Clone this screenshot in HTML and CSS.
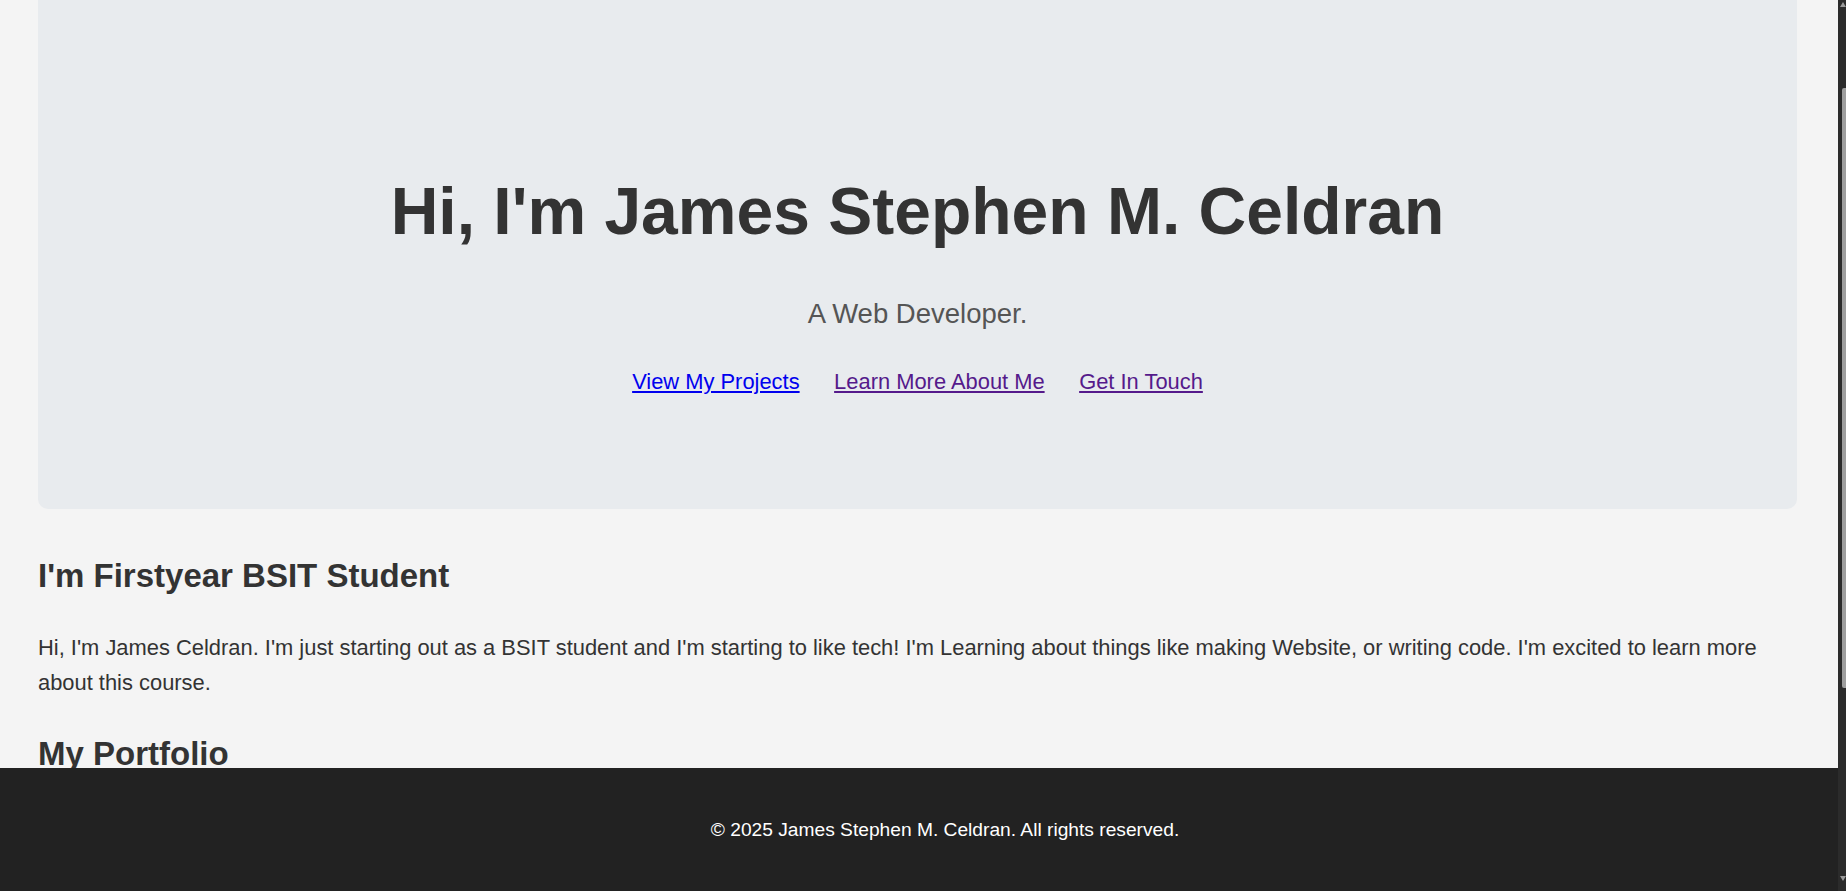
FILE: index.html
```html
<!DOCTYPE html>
<html lang="en">
<head>
<meta charset="utf-8">
<title>James Stephen M. Celdran</title>
<link rel="stylesheet" href="styles.css">
</head>
<body>
<div class="page">
  <div class="viewport">
    <main class="content">
      <section class="hero">
        <h1 class="hero-title">Hi, I'm James Stephen M. Celdran</h1>
        <p class="hero-subtitle">A Web Developer.</p>
        <nav class="hero-links">
          <a class="link link-new" href="#projects">View My Projects</a>
          <a class="link link-visited" href="#about">Learn More About Me</a>
          <a class="link link-visited" href="#contact">Get In Touch</a>
        </nav>
      </section>
      <section class="about" id="about">
        <h2 class="section-title">I'm Firstyear BSIT Student</h2>
        <p class="about-text">Hi, I'm James Celdran. I'm just starting out as a BSIT student and I'm starting to like tech! I'm Learning about things like making Website, or writing code. I'm excited to learn more about this course.</p>
        <h2 class="section-title portfolio-title" id="projects">My Portfolio</h2>
      </section>
    </main>
    <footer class="footer" id="contact">
      <p class="footer-text">© 2025 James Stephen M. Celdran. All rights reserved.</p>
    </footer>
  </div>
  <div class="scrollbar">
    <span class="arrow arrow-up"></span>
    <span class="thumb"></span>
    <span class="arrow arrow-down"></span>
  </div>
</div>
</body>
</html>
```
FILE: styles.css
```css
html, body {
  margin: 0;
  padding: 0;
  height: 100%;
}

body {
  background: #f4f4f4;
  color: #333;
  font-family: "Liberation Sans", Arial, sans-serif;
  overflow: hidden;
}

.page {
  display: flex;
  height: 891px;
}

.viewport {
  flex: 1;
  min-width: 0;
  display: flex;
  flex-direction: column;
}

.content {
  flex: 1;
  overflow: hidden;
  padding: 0 41px 0 38px;
}

.hero {
  background: #e8ebee;
  border-radius: 0 0 10px 10px;
  padding: 171px 20px 114px;
  text-align: center;
}

.hero-title {
  margin: 0;
  font-size: 66px;
  line-height: 80px;
  font-weight: bold;
  color: #333;
}

.hero-subtitle {
  margin: 46.3px 0 0;
  font-size: 27.5px;
  line-height: 33px;
  color: #555;
}

.hero-links {
  margin-top: 38.3px;
  display: flex;
  justify-content: center;
  gap: 34.5px;
  font-size: 21.9px;
  line-height: 26.3px;
}

.link {
  text-decoration: underline;
}

.link-new {
  color: #0000ee;
}

.link-visited {
  color: #551a8b;
}

.section-title {
  margin: 47.5px 0 0;
  font-size: 33px;
  line-height: 39.6px;
  font-weight: bold;
  color: #333;
}

.about-text {
  margin: 33.6px 0 0;
  font-size: 21.9px;
  line-height: 35px;
}

.portfolio-title {
  margin-top: 34.2px;
}

.footer {
  flex: none;
  height: 123px;
  box-sizing: border-box;
  padding: 51px 0 0 52px;
  background: #222;
  color: #fff;
  text-align: center;
}

.footer-text {
  margin: 0;
  font-size: 19.2px;
  line-height: 22px;
}

.scrollbar {
  flex: none;
  width: 8px;
  background: #2b2b2b;
  display: flex;
  flex-direction: column;
  align-items: flex-end;
  padding: 2px 0 10px;
  box-sizing: border-box;
}

.arrow {
  width: 0;
  height: 0;
  border-left: 3px solid transparent;
  border-right: 3px solid transparent;
}

.arrow-up {
  border-bottom: 5px solid #9a9a9a;
}

.arrow-down {
  margin-top: auto;
  border-top: 5px solid #9a9a9a;
}

.thumb {
  width: 4px;
  height: 600px;
  margin-top: 81px;
  background: #9e9e9e;
  border-radius: 2px 0 0 2px;
}
```
